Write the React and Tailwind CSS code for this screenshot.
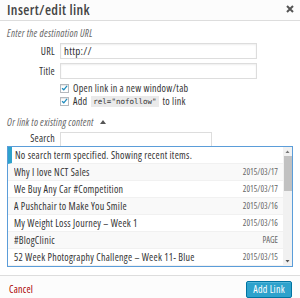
import React from 'react';

const items = [
  { title: 'Why I love NCT Sales', info: '2015/03/17' },
  { title: 'We Buy Any Car #Competition', info: '2015/03/17' },
  { title: 'A Pushchair to Make You Smile', info: '2015/03/16' },
  { title: 'My Weight Loss Journey – Week 1', info: '2015/03/16' },
  { title: '#BlogClinic', info: 'PAGE' },
  { title: '52 Week Photography Challenge – Week 11- Blue', info: '2015/03/15' },
];

const Check = () => (
  <span className="w-[9px] h-[9px] border border-[#b4b9be] bg-white flex items-center justify-center shadow-[inset_0_1px_1px_rgba(0,0,0,0.1)]">
    <svg width="8" height="8" viewBox="0 0 8 8">
      <path d="M1.2 4.2 L3.2 6.1 L6.9 1.6" fill="none" stroke="#1e8cbe" strokeWidth="1.5" />
    </svg>
  </span>
);

export default function App() {
  return (
    <div className="w-[300px] h-[298px] overflow-hidden bg-white text-[#333] font-['Open_Sans',sans-serif] [font-stretch:87%] text-[10px] tracking-[0.25px] flex flex-col">
      <div className="h-[21px] shrink-0 border-b border-[#ddd] bg-[#fcfcfc] flex items-center justify-between pl-[7px] pr-[6px]">
        <span className="text-[14px] leading-[20px] font-semibold tracking-[0.4px] text-[#444]">Insert/edit link</span>
        <svg width="8" height="8" viewBox="0 0 8 8" className="mb-[3px]">
          <path d="M1 1 L7 7 M7 1 L1 7" stroke="#555" strokeWidth="2" />
        </svg>
      </div>

      <div className="px-[7px] flex flex-col">
        <p className="mt-[6px] leading-[12px] italic text-[#666]">Enter the destination URL</p>

        <div className="mt-[4px] flex items-center gap-[5px]">
          <span className="w-[48px] text-right">URL</span>
          <div className="w-[197px] h-[16px] border border-[#ddd] shadow-[inset_0_1px_2px_rgba(0,0,0,0.07)] flex items-center px-[3px] text-[11px]">http://</div>
        </div>
        <div className="mt-[4px] flex items-center gap-[5px]">
          <span className="w-[48px] text-right">Title</span>
          <div className="w-[197px] h-[16px] border border-[#ddd] shadow-[inset_0_1px_2px_rgba(0,0,0,0.07)]"></div>
        </div>

        <div className="mt-[3px] ml-[53px] h-[12px] flex items-center gap-[4px]">
          <Check />
          <span>Open link in a new window/tab</span>
        </div>
        <div className="mt-[1px] ml-[53px] h-[12px] flex items-center gap-[4px]">
          <Check />
          <span>Add</span>
          <code className="bg-[#eaeaea] px-[2px] font-['DejaVu_Sans_Mono',monospace] [font-stretch:normal] tracking-normal text-[7.5px] leading-[11px]">rel="nofollow"</code>
          <span>to link</span>
        </div>

        <p className="mt-[9px] leading-[12px] italic text-[#666] flex items-center gap-[6px]">
          Or link to existing content
          <svg width="6" height="4" viewBox="0 0 6 4"><path d="M0 4 L3 0 L6 4 Z" fill="#555" /></svg>
        </p>

        <div className="mt-[3px] flex items-center gap-[5px]">
          <span className="w-[48px] text-right">Search</span>
          <div className="w-[152px] h-[14px] border border-[#ddd] border-b-0"></div>
        </div>

        <div className="w-[286px] h-[121px] border border-[#5b9dd9] flex">
          <div className="flex-1 flex flex-col">
            <div className="h-[17px] border-l-[4px] border-[#2ea2cc] border-b border-b-[#f1f1f1] flex items-center pl-[3px]">
              No search term specified. Showing recent items.
            </div>
            {items.map((it, i) => (
              <div
                key={i}
                className={`h-[17px] flex items-center justify-between pl-[6px] pr-[5px] border-b border-[#f1f1f1] ${i % 2 === 0 ? 'bg-[#f9f9f9]' : 'bg-white'}`}
              >
                <span className="truncate">{it.title}</span>
                <span className="text-[8.5px] tracking-normal text-[#666] shrink-0 ml-[4px]">{it.info}</span>
              </div>
            ))}
          </div>
          <div className="w-[9px] bg-[#f1f1f1] flex flex-col items-center">
            <svg width="5" height="9" viewBox="0 0 5 9" className="shrink-0"><path d="M0.5 6 L2.5 3.5 L4.5 6 Z" fill="#777" /></svg>
            <div className="w-[8px] h-[35px] bg-[#c1c1c1]"></div>
            <div className="flex-1"></div>
            <svg width="5" height="9" viewBox="0 0 5 9" className="shrink-0"><path d="M0.5 3 L2.5 5.5 L4.5 3 Z" fill="#555" /></svg>
          </div>
        </div>
      </div>

      <div className="mt-[8px] flex-1 border-t border-[#ddd] bg-[#fcfcfc] flex items-center justify-between pl-[9px] pr-[8px]">
        <span className="text-[#a00] mt-[4px]">Cancel</span>
        <button className="w-[46px] h-[17px] mt-[4px] rounded-[2px] bg-[#2ea2cc] border border-[#0074a2] text-white shadow-[inset_0_1px_0_rgba(120,200,230,0.5)]">Add Link</button>
      </div>
    </div>
  );
}
